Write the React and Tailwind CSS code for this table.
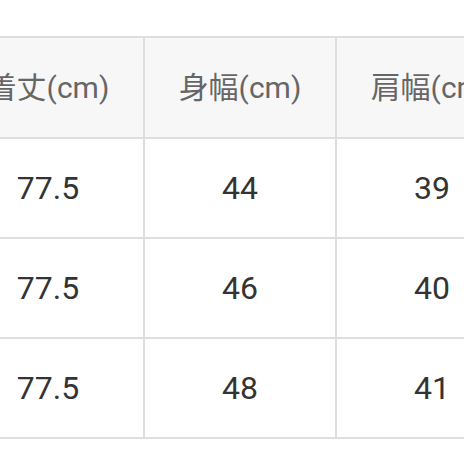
import React from 'react';

const HEADERS = ['着丈(cm)', '身幅(cm)', '肩幅(cm)'];

const ROWS = [
  ['77.5', '44', '39'],
  ['77.5', '46', '40'],
  ['77.5', '48', '41'],
];

function App() {
  return (
    <div className="w-[464px] h-[464px] overflow-hidden bg-white" style={{ fontFamily: 'Roboto, "Noto Sans CJK JP", sans-serif' }}>
      <div className="mt-[36px] ml-[-49px] w-[578px] grid grid-cols-[192px_192px_192px] border-t-2 border-l-2 border-[#dedede]">
        {HEADERS.map((h) => (
          <div
            key={h}
            className="h-[101px] flex items-center justify-center bg-[#f7f7f7] border-r-2 border-b-2 border-[#dedede] text-[30px] text-[#666666] whitespace-nowrap"
          >
            {h}
          </div>
        ))}
        {ROWS.map((row, i) =>
          row.map((cell, j) => (
            <div
              key={`${i}-${j}`}
              className="h-[100px] flex items-center justify-center bg-white border-r-2 border-b-2 border-[#dedede] text-[32px] text-[#333333]"
            >
              {cell}
            </div>
          ))
        )}
      </div>
    </div>
  );
}

export default App;
